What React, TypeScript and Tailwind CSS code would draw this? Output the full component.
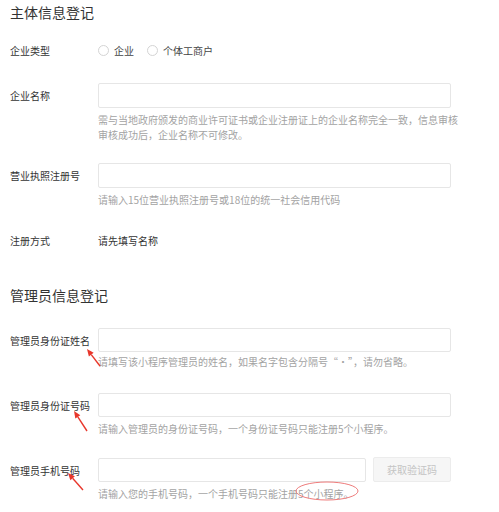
import React from 'react';

const FONT = { fontFamily: '"Noto Sans CJK SC", "Noto Sans", sans-serif' };

function Arrow({ tip, tail }: { tip: [number, number]; tail: [number, number] }) {
  const dx = tip[0] - tail[0];
  const dy = tip[1] - tail[1];
  const len = Math.hypot(dx, dy);
  const ux = dx / len;
  const uy = dy / len;
  const bx = tip[0] - ux * 7;
  const by = tip[1] - uy * 7;
  const nx = -uy * 3;
  const ny = ux * 3;
  return (
    <g>
      <line x1={tail[0]} y1={tail[1]} x2={bx} y2={by} stroke="#e8372c" strokeWidth={1.4} />
      <polygon
        points={`${tip[0]},${tip[1]} ${bx + nx},${by + ny} ${bx - nx},${by - ny}`}
        fill="#e8372c"
      />
    </g>
  );
}

function Radio({ label }: { label: string }) {
  return (
    <div className="flex items-center">
      <span className="w-[11px] h-[11px] rounded-full border border-[#d4d4d4] bg-white" />
      <span className="ml-[5px] text-[10px] text-[#444]">{label}</span>
    </div>
  );
}

function Field({
  label,
  hint,
  mt,
  h = 'h-[25px]',
  hintMt = 'mt-[4px]',
  children,
}: {
  label: string;
  hint: React.ReactNode;
  mt: string;
  h?: string;
  hintMt?: string;
  children?: React.ReactNode;
}) {
  return (
    <div className={`flex ${mt}`}>
      <div className={`w-[88px] ${h} flex items-center text-[10px] text-[#333]`}>{label}</div>
      <div className="w-[353px]">
        {children ?? <div className={`${h} border border-[#e6e6e6] rounded-[2px] bg-white`} />}
        <div className={`${hintMt} w-[362px] text-[10px] leading-[15px] text-[#a3a3a3]`}>{hint}</div>
      </div>
    </div>
  );
}

export default function App() {
  return (
    <div className="relative w-[499px] h-[512px] bg-white overflow-hidden" style={FONT}>
      <div className="pl-[10px]">
        {/* 主体信息 */}
        <div className="mt-[2px] h-[20px] leading-[20px] text-[14px] text-[#333]">主体信息登记</div>

        <div className="mt-[18px] h-[20px] flex items-center">
          <div className="w-[88px] text-[10px] text-[#333]">企业类型</div>
          <Radio label="企业" />
          <div className="ml-[13px]">
            <Radio label="个体工商户" />
          </div>
        </div>

        <Field
          label="企业名称"
          mt="mt-[23px]"
          hint={
            <>
              需与当地政府颁发的商业许可证书或企业注册证上的企业名称完全一致，信息审核
              <br />
              审核成功后，企业名称不可修改。
            </>
          }
        />

        <Field label="营业执照注册号" mt="mt-[21px]" hint="请输入15位营业执照注册号或18位的统一社会信用代码" />

        <div className="mt-[23px] h-[20px] flex items-center text-[10px] text-[#333]">
          <div className="w-[88px]">注册方式</div>
          <div>请先填写名称</div>
        </div>

        {/* 管理员信息 */}
        <div className="mt-[35px] h-[20px] leading-[20px] text-[14px] text-[#333]">管理员信息登记</div>

        <Field
          label="管理员身份证姓名"
          mt="mt-[23px]"
          h="h-[24px]"
          hintMt="mt-[2px]"
          hint="请填写该小程序管理员的姓名，如果名字包含分隔号“·”，请勿省略。"
        />

        <Field
          label="管理员身份证号码"
          mt="mt-[24px]"
          h="h-[24px]"
          hint="请输入管理员的身份证号码，一个身份证号码只能注册5个小程序。"
        />

        <Field
          label="管理员手机号码"
          mt="mt-[22px]"
          h="h-[24px]"
          hint="请输入您的手机号码，一个手机号码只能注册5个小程序。"
        >
          <div className="flex gap-[7px]">
            <div className="w-[268px] h-[24px] border border-[#e6e6e6] rounded-[2px] bg-white" />
            <button className="w-[78px] h-[25px] -mt-[1px] border border-[#ececec] rounded-[2px] bg-[#f6f6f6] text-[10px] text-[#c4c4c4]">
              获取验证码
            </button>
          </div>
        </Field>
      </div>

      {/* annotations */}
      <svg className="absolute inset-0 pointer-events-none" width={499} height={512}>
        <Arrow tip={[87, 349]} tail={[100, 366]} />
        <Arrow tip={[74, 411]} tail={[87, 431]} />
        <Arrow tip={[68, 473]} tail={[83, 490]} />
        <ellipse cx={327} cy={491} rx={31} ry={9} fill="none" stroke="#ee7b7b" strokeWidth={1} />
      </svg>
    </div>
  );
}
